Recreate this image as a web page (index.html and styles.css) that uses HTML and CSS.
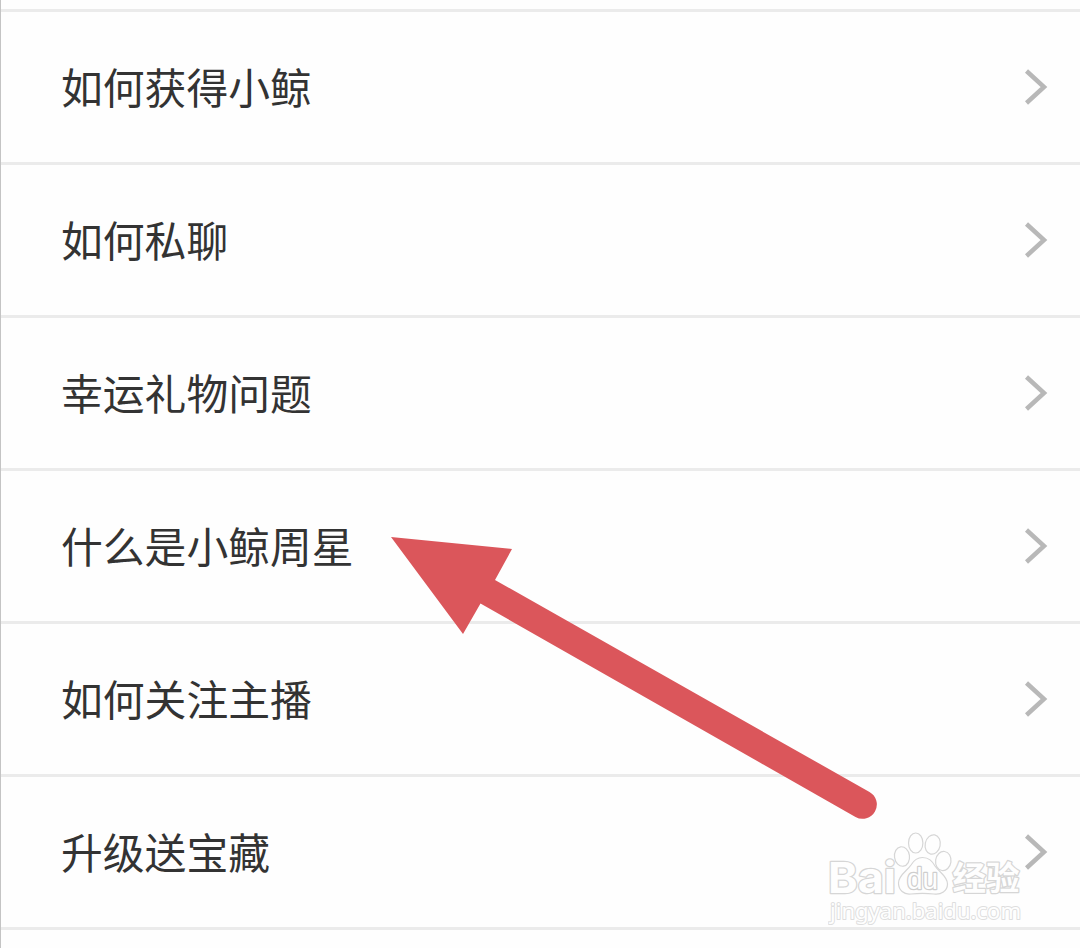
FILE: index.html
```html
<!DOCTYPE html>
<html lang="zh-CN">
<head>
    <meta charset="UTF-8">
    <meta name="viewport" content="width=device-width, initial-scale=1.0">
    <title>常见问题</title>
    <link rel="stylesheet" href="styles.css">
</head>
<body>
    <ul class="question-list">
        <li class="question">
            <span>如何获得小鲸</span>
            <svg class="chevron" viewBox="0 0 24 38"><path d="M2.5 3 L20 19 L2.5 35"/></svg>
        </li>
        <li class="question">
            <span>如何私聊</span>
            <svg class="chevron" viewBox="0 0 24 38"><path d="M2.5 3 L20 19 L2.5 35"/></svg>
        </li>
        <li class="question">
            <span>幸运礼物问题</span>
            <svg class="chevron" viewBox="0 0 24 38"><path d="M2.5 3 L20 19 L2.5 35"/></svg>
        </li>
        <li class="question">
            <span>什么是小鲸周星</span>
            <svg class="chevron" viewBox="0 0 24 38"><path d="M2.5 3 L20 19 L2.5 35"/></svg>
        </li>
        <li class="question">
            <span>如何关注主播</span>
            <svg class="chevron" viewBox="0 0 24 38"><path d="M2.5 3 L20 19 L2.5 35"/></svg>
        </li>
        <li class="question">
            <span>升级送宝藏</span>
            <svg class="chevron" viewBox="0 0 24 38"><path d="M2.5 3 L20 19 L2.5 35"/></svg>
        </li>
    </ul>

    <!-- Arrow pointing at the fourth question -->
    <svg class="arrow" viewBox="0 0 486 283">
        <path d="M0 0 L121 12 L104 43 L478.500 255 A14 14 0 0 1 464.500 280 L89.500 66.500 L72 97 Z"/>
    </svg>

    <svg class="watermark" viewBox="0 0 200 96">
        <text class="brand" x="0" y="63.500" textLength="68" lengthAdjust="spacingAndGlyphs">Bai</text>
        <!-- Paw -->
        <ellipse cx="74" cy="27.500" rx="7.500" ry="9.800" transform="rotate(-8 74 27.500)"/>
        <ellipse cx="87.700" cy="14" rx="7.200" ry="10"/>
        <ellipse cx="104.700" cy="15.500" rx="7.500" ry="9.800" transform="rotate(12 104.700 15.500)"/>
        <ellipse cx="115.300" cy="32" rx="7.700" ry="9.600" transform="rotate(8 115.300 32)"/>
        <path d="M94.500 28.500 C101 28.500 104 32 107 37 C111 43 119.500 47 119.500 55 C119.500 62 113 66 106 65 C98 64 91 64 83 65 C76 66 70.500 61 70.500 54 C70.500 46 79 42 83 36 C86 31 89 28.500 94.500 28.500 Z"/>
        <text class="du" x="79" y="60" textLength="31" lengthAdjust="spacingAndGlyphs">du</text>
        <text class="cn" x="124.500" y="61" textLength="67" lengthAdjust="spacingAndGlyphs">经验</text>
        <text class="site" x="2" y="89.500" textLength="191" lengthAdjust="spacingAndGlyphs">jingyan.baidu.com</text>
    </svg>
</body>
</html>
```
FILE: styles.css
```css
body {
    margin: 0;
    height: 948px;
    overflow: hidden;
    box-sizing: border-box;
    border-left: 1px solid #c4c4c4;
    background-color: #fefefe;
    color: #333;
    font-family: "Noto Sans CJK SC", sans-serif;
}

.question-list {
    list-style: none;
    margin: 9px 0 0;
    padding: 0;
    border-top: 3px solid #ebebeb;
}

.question {
    display: flex;
    justify-content: space-between;
    align-items: center;
    box-sizing: border-box;
    height: 153px;
    padding: 0 32px 0 60px;
    border-bottom: 3px solid #ebebeb;
    font-size: 41.8px;
    line-height: 60px;
}

.question span {
    padding-bottom: 3px;
}

.chevron {
    width: 24px;
    height: 38px;
}

.chevron path {
    fill: none;
    stroke: #b8b8b8;
    stroke-width: 4.5;
}

/* Lies over the list */
.arrow {
    position: absolute;
    left: 391px;
    top: 537px;
    width: 486px;
    height: 283px;
    fill: #db565b;
}

.watermark {
    position: absolute;
    left: 828px;
    top: 829px;
    width: 200px;
    height: 96px;
    fill: #fefefe;
    stroke: #d6d6d6;
    stroke-width: 1.2;
}

.watermark text {
    stroke-linejoin: round;
    paint-order: stroke;
}

.brand {
    font: bold 43px Inter, sans-serif;
    stroke-width: 2.5;
}

.du {
    font: 29px "Liberation Sans", sans-serif;
    stroke: #cecece;
    stroke-width: 2.5;
}

.cn {
    font: bold 33px "Noto Sans CJK SC", sans-serif;
    stroke-width: 2.5;
}

.site {
    font: 22px "Noto Sans", sans-serif;
    stroke: #dedede;
    stroke-width: 2;
}
```
